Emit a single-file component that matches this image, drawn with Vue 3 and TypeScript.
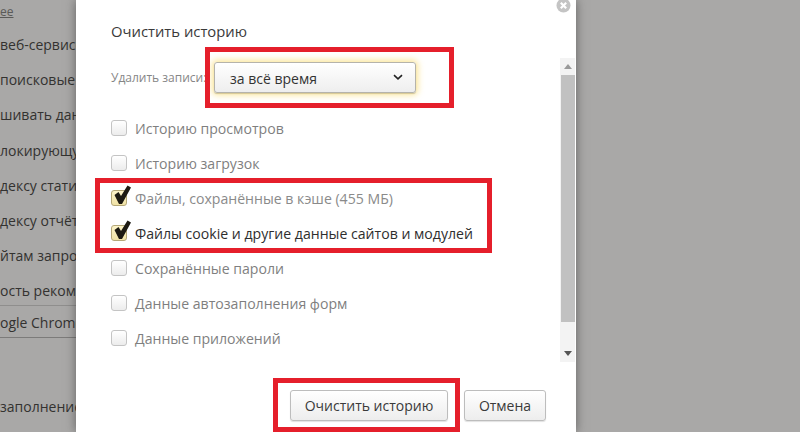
<script setup lang="ts">
const bgLines: string[] = ['веб-сервисов', 'поисковые', 'шивать данные', 'локирующую', 'дексу статистики', 'дексу отчётов', 'йтам запросы', 'ость рекомендации']
const options: { label: string; checked: boolean; muted?: boolean }[] = [
  { label: 'Историю просмотров', checked: false },
  { label: 'Историю загрузок', checked: false },
  { label: 'Файлы, сохранённые в кэше (455 МБ)', checked: true, muted: true },
  { label: 'Файлы cookie и другие данные сайтов и модулей', checked: true },
  { label: 'Сохранённые пароли', checked: false },
  { label: 'Данные автозаполнения форм', checked: false },
  { label: 'Данные приложений', checked: false },
]
</script>

<template>
  <div class="page">
    <aside class="behind">
      <div class="more">ee</div>
      <div v-for="line in bgLines" :key="line" class="bg-line">{{ line }}</div>
      <div class="bg-button">ogle Chrome</div>
      <div class="bg-last">заполнение</div>
    </aside>

    <main class="dialog">
      <h1 class="title">Очистить историю</h1>
      <svg class="close" width="15" height="15" viewBox="0 0 15 15">
        <circle cx="7.5" cy="7.5" r="7" fill="#c4c4c4" />
        <path d="M4.8 4.8l5.4 5.4M10.2 4.8l-5.4 5.4" stroke="#fff" stroke-width="2.2" />
      </svg>

      <section class="scroller">
        <div class="content">
          <div class="range">
            <span class="range-label">Удалить записи:</span>
            <div class="select">
              <span class="select-text">за всё время</span>
              <svg width="10" height="7" viewBox="0 0 10 7">
                <path d="M1 1.2l4 3.6 4-3.6" fill="none" stroke="#222" stroke-width="1.6" />
              </svg>
            </div>
          </div>
          <ul class="options">
            <li v-for="o in options" :key="o.label" class="option" :class="{ muted: o.muted, on: o.checked }">
              <span class="box">
                <svg v-if="o.checked" class="tick" width="21" height="22" viewBox="0 0 21 22">
                  <path d="M3.5 11L7.5 8 10 12 16.5 1.5 20 3.5 11 20 8 20Z" fill="#1d1a12" />
                </svg>
              </span>
              <span class="option-text">{{ o.label }}</span>
            </li>
          </ul>
        </div>
        <div class="scrollbar">
          <span class="arrow up"></span>
          <span class="thumb"></span>
          <span class="arrow down"></span>
        </div>
      </section>

      <footer class="footer">
        <button class="btn primary">Очистить историю</button>
        <button class="btn cancel">Отмена</button>
      </footer>

      <div class="mark mark-select"></div>
      <div class="mark mark-files"></div>
      <div class="mark mark-submit"></div>
    </main>

    <div class="behind-right"></div>
  </div>
</template>

<style>
body { margin: 0; }
</style>

<style scoped>
.page {
  display: flex;
  width: 800px;
  height: 432px;
  overflow: hidden;
  background: #a9a8a7;
  font-family: "Open Sans", "Noto Sans", sans-serif;
  color: #333;
}
.behind {
  width: 76px;
  flex: none;
  overflow: hidden;
  white-space: nowrap;
  font-size: 14px;
  color: #333230;
  display: flex;
  flex-direction: column;
  background: #a9a8a7;
}
.more {
  height: 16px;
  margin-top: 5px;
  font-size: 12px;
  line-height: 14px;
  text-decoration: underline;
  color: #5a5a58;
  margin-bottom: 6px;
}
.bg-line {
  height: 35.2px;
  line-height: 35.2px;
  flex: none;
}
.bg-button {
  flex: none;
  height: 31px;
  line-height: 33px;
  border-top: 1px solid #8f8e8d;
  border-bottom: 1px solid #7c7b7a;
  margin-top: -4px;
}
.bg-last {
  flex: none;
  margin-top: 58px;
  line-height: 22px;
}
.behind-right { flex: 1; }
.dialog {
  position: relative;
  width: 500px;
  flex: none;
  height: 432px;
  background: #fff;
  box-shadow: 0 0 10px rgba(40, 40, 40, 0.55);
  display: flex;
  flex-direction: column;
  box-sizing: border-box;
}
.title {
  margin: 0;
  padding: 20px 0 0 35px;
  height: 58px;
  box-sizing: border-box;
  font-size: 14.8px;
  line-height: 22px;
  font-weight: 400;
  color: #3a3a3a;
}
.close {
  position: absolute;
  left: 480px;
  top: -2px;
}
.scroller {
  display: flex;
  height: 304px;
  flex: none;
}
.content {
  flex: 1;
  padding-left: 35px;
}
.range {
  display: flex;
  align-items: center;
  margin-top: 4px;
}
.range-label {
  width: 103px;
  flex: none;
  font-size: 12px;
  color: #868686;
  white-space: nowrap;
}
.select {
  width: 202px;
  height: 31px;
  box-sizing: border-box;
  padding: 0 12px 0 15px;
  display: flex;
  align-items: center;
  justify-content: space-between;
  border: 1px solid #b5b3ab;
  border-radius: 3px;
  background: linear-gradient(#fff, #eeeeee);
  box-shadow: 0 0 6px 2px rgba(250, 222, 120, 0.75), 0 1px 1px rgba(0, 0, 0, 0.3);
  font-size: 14px;
  color: #333;
}
.select-text { padding-top: 2px; }
.options {
  list-style: none;
  margin: 17px 0 0;
  padding: 0;
}
.option {
  height: 35px;
  display: flex;
  align-items: center;
  gap: 8px;
  font-size: 14.1px;
  color: #7f7f7f;
  white-space: nowrap;
}
.option-text { padding-top: 2px; }
.option.on { color: #2e2e2e; }
.option.on.muted { color: #8a8a8a; }
.box {
  position: relative;
  width: 16px;
  height: 16px;
  flex: none;
  box-sizing: border-box;
  border: 1px solid #c4c4c4;
  border-radius: 3px;
  background: linear-gradient(#fff, #ececec);
}
.option.on .box {
  background: linear-gradient(#fdf4c9, #f0e2a6);
  border-color: #b5a878;
}
.tick {
  position: absolute;
  left: -1px;
  top: -7px;
}
.scrollbar {
  width: 15px;
  flex: none;
  margin-right: 1px;
  background: #f3f3f3;
  display: flex;
  flex-direction: column;
  align-items: center;
}
.arrow {
  width: 0;
  height: 0;
  flex: none;
  border-left: 4px solid transparent;
  border-right: 4px solid transparent;
}
.arrow.up {
  margin-top: 6px;
  margin-bottom: 6px;
  border-bottom: 5px solid #9a9a9a;
}
.arrow.down {
  margin-top: 29px;
  border-top: 5px solid #555;
}
.thumb {
  width: 14px;
  height: 247px;
  flex: none;
  background: #c1c1c1;
}
.footer {
  display: flex;
  justify-content: flex-end;
  align-items: flex-start;
  gap: 16px;
  padding: 28px 30px 0 0;
}
.btn {
  height: 31px;
  padding: 0;
  box-sizing: border-box;
  border: 1px solid #bdbdbd;
  border-radius: 3px;
  background: linear-gradient(#ffffff, #ededed);
  box-shadow: 0 1px 1px rgba(0, 0, 0, 0.12);
  font-family: inherit;
  font-size: 14px;
  color: #3a3a3a;
}
.primary { width: 158px; }
.cancel { width: 82px; }
.mark {
  position: absolute;
  box-sizing: border-box;
  border: 5px solid #e51f2b;
  pointer-events: none;
}
.mark-select { left: 129px; top: 47px; width: 249px; height: 61px; }
.mark-files { left: 19px; top: 178px; width: 397px; height: 75px; }
.mark-submit { left: 197px; top: 378px; width: 187px; height: 54px; }
</style>
